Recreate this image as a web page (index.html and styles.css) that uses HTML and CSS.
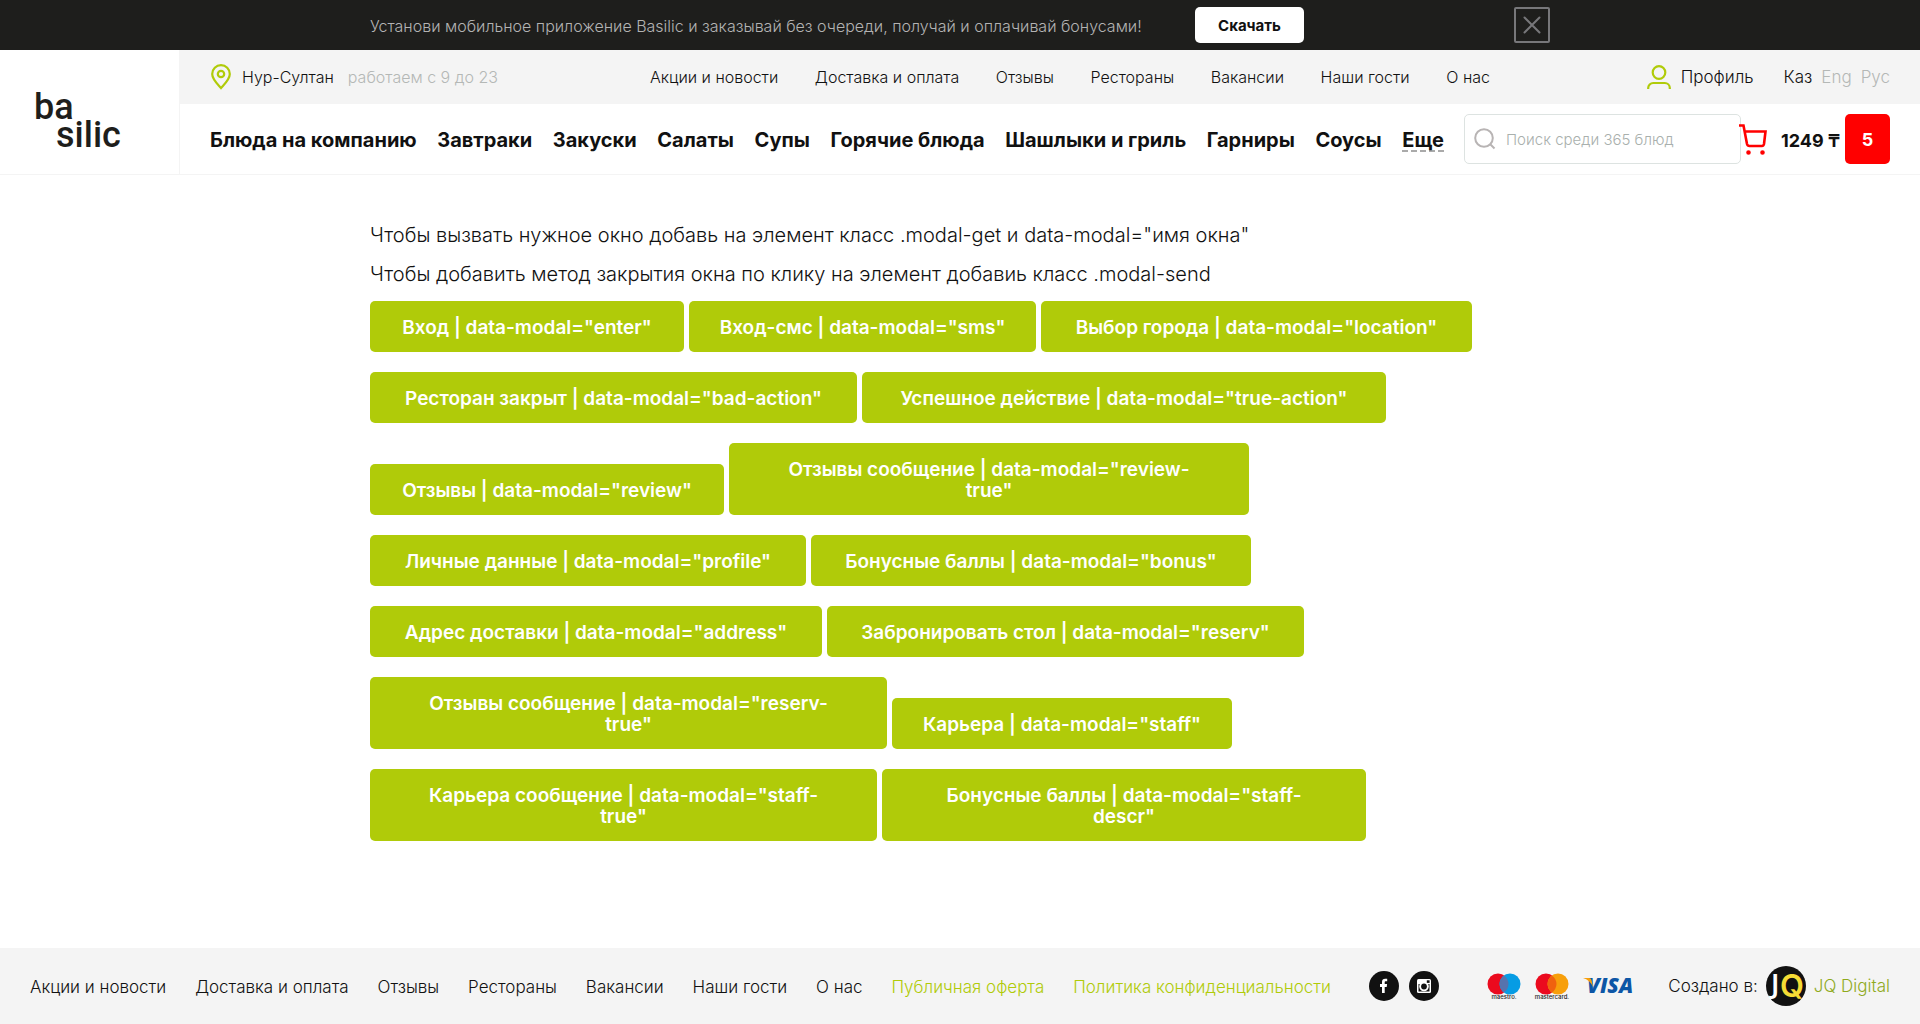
FILE: index.html
```html
<!DOCTYPE html>
<html lang="ru">
<head>
<meta charset="utf-8">
<title>Basilic</title>
<link rel="stylesheet" href="styles.css">
</head>
<body>
<div class="promo">
  <div class="container promo-inner">
    <p class="promo-text">Установи мобильное приложение Basilic и заказывай без очереди, получай и оплачивай бонусами!</p>
    <button class="promo-download" type="button">Скачать</button>
    <button class="promo-close" type="button" aria-label="Закрыть">
      <svg width="36" height="36" viewBox="0 0 36 36" fill="none" stroke="#77777a" stroke-width="2"><rect x="1" y="1" width="34" height="34" rx="1"/><path d="M10.500 10.500l15 15M25.500 10.500l-15 15" stroke-linecap="round"/></svg>
    </button>
  </div>
</div>

<header class="header">
  <a class="logo" href="#"><span>ba</span><span class="logo-second">silic</span></a>
  <div class="header-main">
    <div class="topbar">
      <div class="city">
        <svg width="22" height="26" viewBox="-1 0 22 26" fill="none" stroke="#b0cb09" stroke-width="2.200"><path d="M10 24C7 20.500 1.200 15.500 1.200 10a8.800 8.800 0 0 1 17.600 0C18.800 15.500 13 20.500 10 24z"/><circle cx="10" cy="10" r="3.200"/></svg>
        <a href="#">Нур-Султан</a>
        <span class="muted hours">работаем с 9 до 23</span>
      </div>
      <nav class="topnav">
        <a href="#">Акции и новости</a><a href="#">Доставка и оплата</a><a href="#">Отзывы</a><a href="#">Рестораны</a><a href="#">Вакансии</a><a href="#">Наши гости</a><a href="#">О нас</a>
      </nav>
      <div class="account">
        <a class="profile" href="#"><svg width="24" height="24" viewBox="0 0 24 24" fill="none" stroke="#b0cb09" stroke-width="2.200"><circle cx="12" cy="7.500" r="6.300"/><path d="M1.200 24v-1a5 5 0 0 1 5-5h11.600a5 5 0 0 1 5 5v1"/></svg>Профиль</a>
        <div class="langs"><a href="#">Каз</a><a class="muted" href="#">Eng</a><a class="muted" href="#">Рус</a></div>
      </div>
    </div>
    <div class="menubar">
      <nav class="menu">
        <a href="#">Блюда на компанию</a><a href="#">Завтраки</a><a href="#">Закуски</a><a href="#">Салаты</a><a href="#">Супы</a><a href="#">Горячие блюда</a><a href="#">Шашлыки и гриль</a><a href="#">Гарниры</a><a href="#">Соусы</a><a class="more" href="#">Еще</a>
      </nav>
      <form class="search">
        <svg width="22" height="22" viewBox="0 0 22 22" fill="none" stroke="#b8b4b4" stroke-width="2"><circle cx="10" cy="10" r="8.800"/><path d="M16 16l4.500 4.500"/></svg>
        <input type="search" aria-label="Поиск" placeholder="Поиск среди 365 блюд">
      </form>
      <a class="cart" href="#">
        <svg width="28" height="31" viewBox="0 0 28 31" fill="none" stroke="#f00" stroke-width="2.600"><path d="M0 1.500h4.500L8 20q.5 2 2.500 2h12.500q1.500 0 2-2L26.500 7.500H5.500"/><circle cx="9.500" cy="28.500" r="1" fill="#f00"/><circle cx="23.500" cy="28.500" r="1" fill="#f00"/></svg>
        <span class="cart-sum">1249 ₸</span>
        <span class="cart-count">5</span>
      </a>
    </div>
  </div>
</header>

<main class="container content">
  <p>Чтобы вызвать нужное окно добавь на элемент класс .modal-get и data-modal="имя окна"</p>
  <p>Чтобы добавить метод закрытия окна по клику на элемент добавиь класс .modal-send</p>
  <div class="rows">
    <div class="row"><button class="btn w-enter">Вход | data-modal="enter"</button><button class="btn w-sms">Вход-смс | data-modal="sms"</button><button class="btn w-location">Выбор города | data-modal="location"</button></div>
    <div class="row"><button class="btn w-bad">Ресторан закрыт | data-modal="bad-action"</button><button class="btn w-true">Успешное действие | data-modal="true-action"</button></div>
    <div class="row"><button class="btn w-review">Отзывы | data-modal="review"</button><button class="btn w-review-true">Отзывы сообщение | data-modal="review-<br>true"</button></div>
    <div class="row"><button class="btn w-profile">Личные данные | data-modal="profile"</button><button class="btn w-bonus">Бонусные баллы | data-modal="bonus"</button></div>
    <div class="row"><button class="btn w-address">Адрес доставки | data-modal="address"</button><button class="btn w-reserv">Забронировать стол | data-modal="reserv"</button></div>
    <div class="row"><button class="btn w-reserv-true">Отзывы сообщение | data-modal="reserv-<br>true"</button><button class="btn w-staff">Карьера | data-modal="staff"</button></div>
    <div class="row"><button class="btn w-staff-true">Карьера сообщение | data-modal="staff-<br>true"</button><button class="btn w-staff-descr">Бонусные баллы | data-modal="staff-<br>descr"</button></div>
  </div>
</main>

<footer class="footer">
  <nav class="footer-nav">
    <a href="#">Акции и новости</a><a href="#">Доставка и оплата</a><a href="#">Отзывы</a><a href="#">Рестораны</a><a href="#">Вакансии</a><a href="#">Наши гости</a><a href="#">О нас</a><a class="green" href="#">Публичная оферта</a><a class="green" href="#">Политика конфиденциальности</a>
  </nav>
  <div class="social">
    <a href="#" aria-label="Facebook"><svg width="30" height="30" viewBox="0 0 30 30"><circle cx="15" cy="15" r="15" fill="#111"/><path d="M13 22v-6h-2v-3h2v-2c0-2.200 1.200-3.300 3.200-3.300h2v2.600h-1.300c-.8 0-1.200.3-1.200 1.100V13h2.400l-.4 3h-2v6z" fill="#fff"/></svg></a>
    <a href="#" aria-label="Instagram"><svg width="30" height="30" viewBox="0 0 30 30"><circle cx="15" cy="15" r="15" fill="#111"/><rect x="8" y="8" width="14" height="14" rx="1.500" fill="#fff"/><path d="M9.500 13h11v7.500h-11z" fill="#111"/><circle cx="15" cy="15.500" r="4.800" fill="#fff"/><circle cx="15" cy="15.500" r="2.900" fill="#111"/><rect x="17.800" y="9.300" width="2.800" height="2.600" fill="#111"/></svg></a>
  </div>
  <div class="payments">
    <svg width="34" height="27" viewBox="0 0 34 27"><circle cx="11" cy="11" r="10.500" fill="#eb0a1e"/><circle cx="23" cy="11" r="10.500" fill="#069ce4"/><path d="M17 2.400a10.500 10.500 0 0 1 0 17.200a10.500 10.500 0 0 1 0-17.200z" fill="#5673ad"/><text x="17" y="26" class="card-name">maestro.</text></svg>
    <svg width="34" height="27" viewBox="0 0 34 27"><circle cx="11" cy="11" r="10.500" fill="#eb0a1e"/><circle cx="23" cy="11" r="10.500" fill="#f79f0b"/><path d="M17 2.400a10.500 10.500 0 0 1 0 17.200a10.500 10.500 0 0 1 0-17.200z" fill="#f0620f"/><text x="17" y="26" class="card-name">mastercard.</text></svg>
    <svg width="50" height="27" viewBox="0 0 50 27"><text x="4" y="20" class="visa">VISA</text><path d="M0 5h6q2 0 2.500 2l1.500 7Q7 7 0 5z" fill="#f79f0b"/></svg>
  </div>
  <div class="credit">
    <span>Создано в:</span>
    <svg width="40" height="40" viewBox="0 0 40 40"><circle cx="20" cy="20" r="20" fill="#111"/><text x="5" y="27" class="jq-j">J</text><text x="14" y="31" class="jq-q">Q</text></svg>
    <a class="green credit-link" href="#">JQ Digital</a>
  </div>
</footer>
</body>
</html>
```
FILE: styles.css
```css
* { box-sizing: border-box; }
body { margin: 0; min-height: 100vh; display: flex; flex-direction: column; background: #fff; color: #111; font: 300 16px/20px Inter, sans-serif; }
a { color: inherit; text-decoration: none; white-space: nowrap; }
p { margin: 0; }
svg { display: block; flex: none; overflow: visible; }
button { font: inherit; border: 0; cursor: pointer; }
.container { width: 1180px; max-width: 100%; margin: 0 auto; }
.muted { color: #b4b8b6; }
.green { color: #b0cb09; }

.promo { background: #1e1e1c; color: #b3b3b3; }
.promo-inner { min-height: 50px; display: flex; align-items: center; }
.promo-text { flex: 0 1 795px; padding-top: 2px; }
.promo-download { margin-left: 30px; width: 109px; height: 36px; padding: 2px 0 0; border-radius: 5px; background: #fff; color: #111; font-size: 15px; font-weight: 700; }
.promo-close { margin-left: auto; padding: 0; background: none; }

.header { display: flex; border-bottom: 1px solid #f4f4f4; }
.logo { width: 180px; padding: 43px 0 0 34px; border-right: 1px solid #f4f4f4; display: flex; flex-direction: column; font: 500 36px/28px Roboto, sans-serif; color: #1e1e1c; }
.logo-second { padding-left: 22px; }
.header-main { flex: 1; min-width: 0; }
.topbar { min-height: 54px; background: #f4f4f4; padding: 0 30px; display: flex; align-items: center; }
.city, .profile, .langs, .account { display: flex; align-items: center; gap: 10px; }
.city { flex: 0 0 440px; }
.hours { margin-left: 4px; }
.topnav { flex: 0 1 840px; display: flex; justify-content: space-between; }
.account { margin-left: auto; gap: 30px; font-size: 17px; }
.account .langs { gap: 9px; }
.menubar { min-height: 70px; padding: 0 30px; display: flex; align-items: center; font-size: 20px; font-weight: 700; }
.menu { flex: 0 1 1234px; display: flex; justify-content: space-between; padding-top: 4px; }
.more { border-bottom: 2px dashed #aaa; }
.search { display: flex; align-items: center; gap: 10px; flex: 1; min-width: 0; height: 50px; padding: 0 9px; border: 1px solid #dde3e1; border-radius: 5px; margin-left: 20px; }
.search input { border: 0; padding: 2px 0 0; flex: 1; min-width: 0; background: none; outline: 0; color: #111; font: 300 15px/20px Inter, sans-serif; }
.search input::placeholder { color: #a9b0ad; }
.cart { display: flex; align-items: center; flex: 0 0 151px; margin-left: -2px; }
.cart-sum { margin-left: auto; padding: 3px 5px 0 0; font-size: 18px; }
.cart-count { flex: 0 0 45px; height: 50px; padding-top: 2px; border-radius: 5px; background: #f00; color: #fff; font-size: 18px; line-height: 48px; text-align: center; }

.content { flex: 1; padding-top: 50px; padding-bottom: 107px; }
.content p { font-size: 20px; line-height: 20px; margin-bottom: 19px; }
.rows { display: flex; flex-direction: column; gap: 20px; margin-top: -2px; }
.row { display: flex; align-items: flex-end; gap: 5px; }
.btn { max-width: 100%; padding: 16px 0 14px; border-radius: 5px; background: #b0cb09; color: #fff; font-size: 19px; line-height: 21px; font-weight: 600; }
.w-enter { width: 314px; }
.w-sms { width: 347px; }
.w-location { width: 431px; }
.w-bad { width: 487px; }
.w-true { width: 524px; }
.w-review { width: 354px; }
.w-review-true { width: 520px; }
.w-profile { width: 436px; }
.w-bonus { width: 440px; }
.w-address { width: 452px; }
.w-reserv { width: 477px; }
.w-reserv-true { width: 517px; }
.w-staff { width: 340px; }
.w-staff-true { width: 507px; }
.w-staff-descr { width: 484px; }

.footer { min-height: 76px; background: #f4f4f4; padding: 0 30px; display: flex; align-items: center; font-size: 17px; }
.footer-nav { flex: 0 1 1301px; display: flex; justify-content: space-between; padding-top: 2px; }
.social { display: flex; gap: 10px; margin-left: 38px; }
.payments { display: flex; gap: 14px; margin-left: 48px; }
.card-name { font: 500 6px Inter, sans-serif; text-anchor: middle; fill: #222; }
.visa { font: italic 800 21px "Open Sans", sans-serif; fill: #0d56a6; }
.credit { display: flex; align-items: center; gap: 8px; margin-left: auto; }
.credit-link { color: #8faa1c; }
.jq-j { font: 600 27px "Noto Sans", sans-serif; fill: #fff; }
.jq-q { font: 600 31px Inter, sans-serif; fill: #f5dc35; }
```
